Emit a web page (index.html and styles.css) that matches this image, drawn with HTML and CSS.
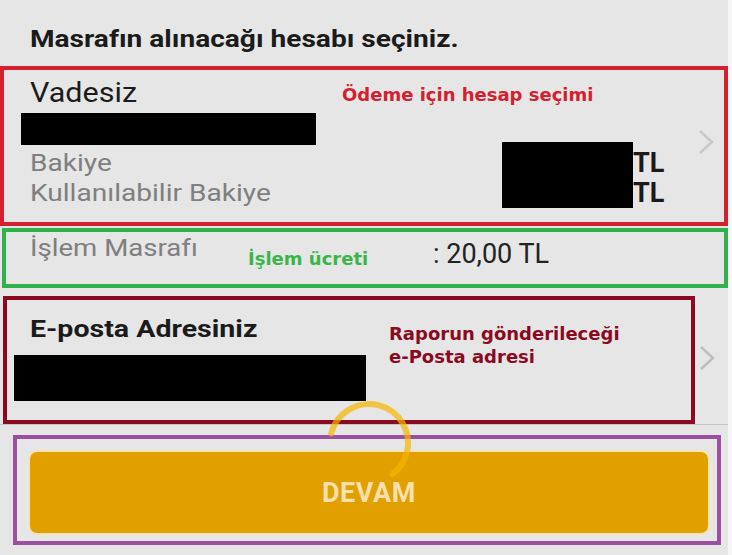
FILE: index.html
```html
<!DOCTYPE html>
<html lang="tr">
<head>
<meta charset="utf-8">
<title>Masraf</title>
<link rel="stylesheet" href="styles.css">
</head>
<body>
<main class="screen">
  <h1 class="title"><span class="sx sx-title">Masrafın alınacağı hesabı seçiniz.</span></h1>

  <section class="box box-red account">
    <div class="acct-left">
      <div class="acct-type"><span class="sx sx-type">Vadesiz</span></div>
      <div class="mask mask-acct"></div>
      <div class="muted-line first"><span class="sx sx-muted">Bakiye</span></div>
      <div class="muted-line"><span class="sx sx-muted">Kullanılabilir Bakiye</span></div>
    </div>
    <div class="acct-amounts">
      <div class="mask mask-amount"></div>
      <div class="cur"><div>TL</div><div>TL</div></div>
    </div>
    <svg class="chev chev-acct" width="16" height="26" viewBox="0 0 16 26"><polyline points="2,2 14,13 2,24" fill="none" stroke="#c8c8c8" stroke-width="2.4"/></svg>
    <span class="note note-red">Ödeme için hesap seçimi</span>
  </section>

  <section class="box box-green fee-row">
    <div class="fee-label"><span class="sx sx-fee">İşlem Masrafı</span></div>
    <div class="fee-value">: 20,00 TL</div>
    <span class="note note-green">İşlem ücreti</span>
  </section>

  <div class="email-row">
    <section class="box box-maroon email">
      <div class="email-title"><span class="sx sx-email">E-posta Adresiniz</span></div>
      <div class="mask mask-email"></div>
      <span class="note note-maroon">Raporun gönderileceği<br>e-Posta adresi</span>
    </section>
    <svg class="chev chev-email" width="16" height="26" viewBox="0 0 16 26"><polyline points="2,2 14,13 2,24" fill="none" stroke="#bdbdbd" stroke-width="2.4"/></svg>
  </div>

  <section class="box box-purple action">
    <button class="btn" type="button">DEVAM</button>
  </section>

  <svg class="spinner" width="90" height="90" viewBox="0 0 90 90"><circle cx="45" cy="45" r="39" fill="none" stroke="#f7b500" stroke-opacity="0.7" stroke-width="6" stroke-dasharray="149 245" stroke-linecap="round" transform="rotate(194 45 45)"/></svg>
</main>
</body>
</html>
```
FILE: styles.css
```css
* { box-sizing: border-box; }
html, body { margin: 0; padding: 0; }
body {
  background: #f6f6f6;
  font-family: Roboto, "Liberation Sans", sans-serif;
  color: #1b1b1b;
}
.screen {
  position: relative;
  width: 728px;
  height: 555px;
  background: #e6e6e6;
  overflow: hidden;
}
.sx {
  display: inline-block;
  white-space: nowrap;
  transform-origin: 0 50%;
}
.sx-title { transform: scaleX(1.17); }
.sx-type { transform: scaleX(1.13); }
.sx-muted { transform: scaleX(1.17); }
.sx-fee { transform: scaleX(1.2); }
.sx-email { transform: scaleX(1.19); }

.title {
  margin: 0 0 13px;
  padding: 25px 0 0 30px;
  font-size: 24px;
  line-height: 28px;
  font-weight: 700;
  color: #1b1b1b;
}
.box { position: relative; }
.box-red {
  width: 728px;
  height: 160px;
  border: 4px solid #d4202f;
}
.box-green {
  margin: 2px 0 0 2px;
  width: 726px;
  height: 60px;
  border: 4px solid #2fb24b;
}
.box-maroon {
  margin-left: 3px;
  width: 692px;
  height: 128px;
  border: 4px solid #8a0b1f;
}
.box-purple {
  margin: 10px 0 0 13px;
  width: 708px;
  height: 110px;
  border: 4px solid #9c4f9f;
  padding: 11px 7px 6px 11px;
}
.mask { background: #000; }

/* account */
.account {
  display: flex;
  align-items: flex-start;
  padding-right: 10px;
}
.acct-left {
  flex: 1;
  padding: 7px 0 0 26px;
}
.acct-type {
  font-size: 27px;
  line-height: 32px;
  color: #1b1b1b;
}
.mask-acct {
  margin: 4px 0 0 -9px;
  width: 295px;
  height: 32px;
}
.muted-line {
  font-size: 24px;
  line-height: 30px;
  color: #7f7f7f;
}
.muted-line.first { margin-top: 3px; }
.acct-amounts {
  display: flex;
  margin-top: 72px;
}
.mask-amount {
  width: 131px;
  height: 66px;
}
.cur {
  width: 30px;
  padding-top: 6px;
  font-size: 27px;
  line-height: 30px;
  font-weight: 700;
  color: #1b1b1b;
}
.chev { display: block; flex: none; }
.chev-acct { margin: 59px 0 0 35px; }

/* fee */
.fee-row {
  display: flex;
  align-items: flex-start;
  padding-left: 24px;
}
.fee-label {
  width: 403px;
  margin-top: 3px;
  font-size: 23px;
  line-height: 28px;
  color: #7f7f7f;
}
.fee-value {
  margin-top: 6px;
  font-size: 27px;
  line-height: 32px;
  color: #222;
  white-space: nowrap;
}

/* email */
.email-row {
  display: flex;
  align-items: flex-start;
  margin-top: 8px;
  border-bottom: 1px solid #c4c4c4;
}
.email { padding: 15px 0 0 23px; }
.email-title {
  font-size: 24px;
  line-height: 28px;
  font-weight: 700;
  color: #1b1b1b;
}
.mask-email {
  margin: 12px 0 0 -16px;
  width: 352px;
  height: 46px;
}
.chev-email { margin: 49px 0 0 4px; }

/* notes (annotation overlays) */
.note {
  position: absolute;
  font-family: "DejaVu Sans", sans-serif;
  font-weight: 700;
  font-size: 18px;
  line-height: 22px;
  white-space: nowrap;
}
.note-red { left: 338px; top: 14px; color: #d3202f; }
.note-green { left: 242px; top: 16px; color: #3ab54a; }
.note-maroon { left: 382px; top: 22px; line-height: 23px; color: #8a0b1f; }

/* action */
.btn {
  display: block;
  width: 100%;
  height: 100%;
  border: 2px solid #f6e4b8;
  border-radius: 9px;
  background: #e29f00;
  color: #f7dfae;
  font-family: Roboto, "Liberation Sans", sans-serif;
  font-weight: 700;
  font-size: 27px;
  letter-spacing: 0.6px;
  padding: 0;
}
.spinner {
  position: absolute;
  left: 324px;
  top: 398px;
}
```
